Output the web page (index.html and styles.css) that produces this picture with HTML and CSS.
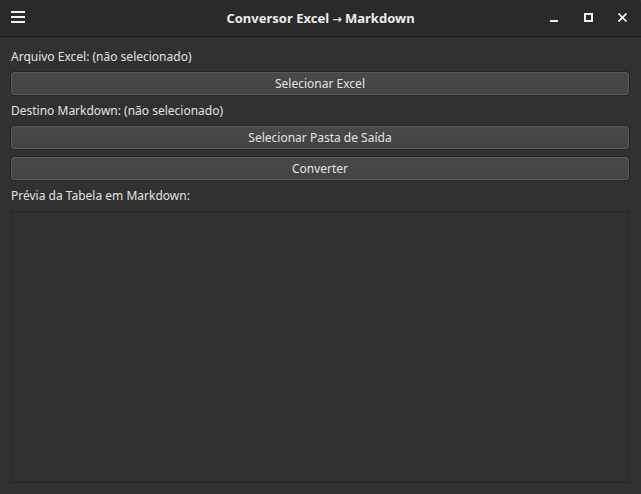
FILE: index.html
```html
<!DOCTYPE html>
<html lang="pt">
<head>
<meta charset="utf-8">
<title>Conversor Excel → Markdown</title>
<link rel="stylesheet" href="styles.css">
</head>
<body>
<div class="window">
  <header class="titlebar">
    <div class="menu-btn">
      <svg width="14" height="12" viewBox="0 0 14 12"><rect x="0" y="0" width="14" height="2" fill="#f0f0f0"/><rect x="0" y="5" width="14" height="2" fill="#f0f0f0"/><rect x="0" y="10" width="14" height="2" fill="#f0f0f0"/></svg>
    </div>
    <div class="title">Conversor Excel <span class="arrow">→</span> Markdown</div>
    <div class="controls">
      <span class="ctl"><svg width="9" height="9" viewBox="0 0 9 9"><rect x="0" y="7" width="8" height="2" fill="#f0f0f0"/></svg></span>
      <span class="ctl"><svg width="9" height="9" viewBox="0 0 9 9"><rect x="1" y="1" width="7" height="7" fill="none" stroke="#f0f0f0" stroke-width="2"/></svg></span>
      <span class="ctl"><svg width="9" height="9" viewBox="0 0 9 9"><path d="M0.5 0.5 L8.5 8.5 M8.5 0.5 L0.5 8.5" stroke="#f0f0f0" stroke-width="1.8"/></svg></span>
    </div>
  </header>
  <main class="content">
    <div class="label">Arquivo Excel: (não selecionado)</div>
    <button class="btn">Selecionar Excel</button>
    <div class="label">Destino Markdown: (não selecionado)</div>
    <button class="btn">Selecionar Pasta de Saída</button>
    <button class="btn btn-next">Converter</button>
    <div class="label">Prévia da Tabela em Markdown:</div>
    <div class="preview"></div>
  </main>
</div>
</body>
</html>
```
FILE: styles.css
```css
* { box-sizing: border-box; }
html, body { margin: 0; padding: 0; background: #313131; }
body { font-family: "Noto Sans", "Open Sans", sans-serif; }
.window {
  width: 641px;
  height: 494px;
  display: flex;
  flex-direction: column;
  background: #313131;
}
.titlebar {
  height: 37px;
  flex: none;
  background: #2a2a2a;
  border-bottom: 1px solid #171717;
  border-radius: 5px 5px 0 0;
  display: flex;
  align-items: center;
  position: relative;
}
.menu-btn {
  width: 36px;
  display: flex;
  justify-content: center;
  margin-top: -3px;
}
.title {
  position: absolute;
  left: 0; right: 0;
  text-align: center;
  color: #ececec;
  font-weight: bold;
  font-size: 13px;
  top: 9px;
  pointer-events: none;
}
.arrow {
  font-family: "DejaVu Sans", sans-serif;
  font-size: 11px;
}
.controls {
  margin-left: auto;
  display: flex;
  margin-right: 2px;
  margin-top: -1px;
}
.ctl {
  width: 34px;
  height: 20px;
  display: flex;
  align-items: center;
  justify-content: center;
}
.content {
  flex: 1;
  display: flex;
  flex-direction: column;
  gap: 7px;
  padding: 11px 12px 11px 11px;
}
.label {
  color: #e2e2e2;
  font-size: 12px;
  line-height: 17px;
  height: 17px;
}
.btn {
  height: 23px;
  width: 100%;
  flex: none;
  font-family: inherit;
  font-size: 12px;
  color: #e4e4e4;
  background: linear-gradient(#494949, #434343);
  border: 1px solid #595959;
  border-radius: 3px;
  box-shadow: 0 0 0 1px #262626;
  padding: 0;
}
.btn-next { margin-top: 1px; }
.preview {
  flex: 1;
  background: #313131;
  border: 1px solid #262626;
}
```
